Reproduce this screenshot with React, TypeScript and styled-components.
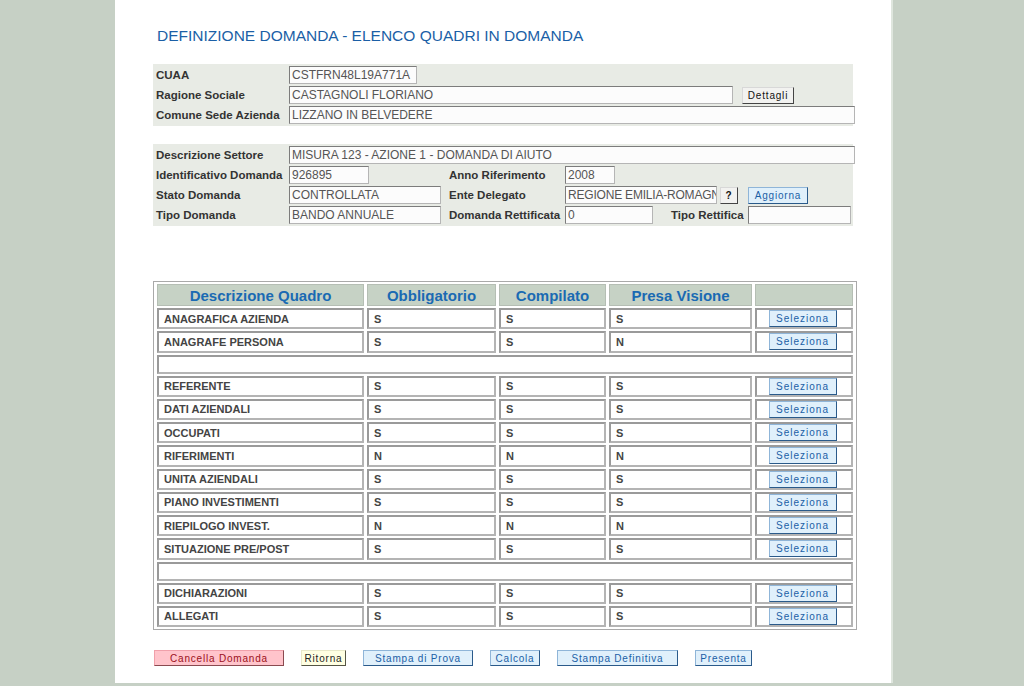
import React from "react";
import styled, { createGlobalStyle } from "styled-components";

const GlobalStyle = createGlobalStyle`
  body {
    margin: 0;
    background-color: #c6d0c5;
    font-family: "Liberation Sans", Arial, sans-serif;
  }
`;

type Quadro = { name: string; obb: string; comp: string; presa: string } | null;

const quadri: Quadro[] = [
  { name: "ANAGRAFICA AZIENDA", obb: "S", comp: "S", presa: "S" },
  { name: "ANAGRAFE PERSONA", obb: "S", comp: "S", presa: "N" },
  null,
  { name: "REFERENTE", obb: "S", comp: "S", presa: "S" },
  { name: "DATI AZIENDALI", obb: "S", comp: "S", presa: "S" },
  { name: "OCCUPATI", obb: "S", comp: "S", presa: "S" },
  { name: "RIFERIMENTI", obb: "N", comp: "N", presa: "N" },
  { name: "UNITA AZIENDALI", obb: "S", comp: "S", presa: "S" },
  { name: "PIANO INVESTIMENTI", obb: "S", comp: "S", presa: "S" },
  { name: "RIEPILOGO INVEST.", obb: "N", comp: "N", presa: "N" },
  { name: "SITUAZIONE PRE/POST", obb: "S", comp: "S", presa: "S" },
  null,
  { name: "DICHIARAZIONI", obb: "S", comp: "S", presa: "S" },
  { name: "ALLEGATI", obb: "S", comp: "S", presa: "S" },
];

const App = () => {
  return (
    <>
      <GlobalStyle />
      <Page>
        <Title>DEFINIZIONE DOMANDA - ELENCO QUADRI IN DOMANDA</Title>

        <Panel>
          <Row>
            <Label>CUAA</Label>
            <Field $w={128} readOnly value="CSTFRN48L19A771A" />
          </Row>
          <Row>
            <Label>Ragione Sociale</Label>
            <Field $w={444} readOnly value="CASTAGNOLI FLORIANO" />
            <SmallButton $w={52} $ml={9}>Dettagli</SmallButton>
          </Row>
          <Row>
            <Label>Comune Sede Azienda</Label>
            <Field $w={566} readOnly value="LIZZANO IN BELVEDERE" />
          </Row>
        </Panel>

        <Panel $mt={18}>
          <Row>
            <Label>Descrizione Settore</Label>
            <Field $w={566} readOnly value="MISURA 123 - AZIONE 1 - DOMANDA DI AIUTO" />
          </Row>
          <Row>
            <Label>Identificativo Domanda</Label>
            <Cell>
              <Field $w={80} readOnly value="926895" />
            </Cell>
            <Label $w={116} $inner>Anno Riferimento</Label>
            <Field $w={50} readOnly value="2008" />
          </Row>
          <Row>
            <Label>Stato Domanda</Label>
            <Cell>
              <Field $w={152} readOnly value="CONTROLLATA" />
            </Cell>
            <Label $w={116} $inner>Ente Delegato</Label>
            <Field $w={152} $tight readOnly value="REGIONE EMILIA-ROMAGNA" />
            <SmallButton $w={18} $ml={3} $bold>?</SmallButton>
            <BlueButton $w={60} $ml={10}>Aggiorna</BlueButton>
          </Row>
          <Row>
            <Label>Tipo Domanda</Label>
            <Cell>
              <Field $w={152} readOnly value="BANDO ANNUALE" />
            </Cell>
            <Label $w={116} $inner>Domanda Rettificata</Label>
            <Field $w={88} readOnly value="0" />
            <Label $w={77} $ml={18} $inner>Tipo Rettifica</Label>
            <Field $w={103} readOnly value="" />
          </Row>
        </Panel>

        <Table>
          <colgroup>
            <col style={{ width: 207 }} />
            <col style={{ width: 129 }} />
            <col style={{ width: 107 }} />
            <col style={{ width: 143 }} />
            <col style={{ width: 98 }} />
          </colgroup>
          <thead>
            <tr>
              <Th>Descrizione Quadro</Th>
              <Th>Obbligatorio</Th>
              <Th>Compilato</Th>
              <Th>Presa Visione</Th>
              <Th></Th>
            </tr>
          </thead>
          <tbody>
            {quadri.map((q, i) =>
              q ? (
                <tr key={i}>
                  <Td>{q.name}</Td>
                  <Td>{q.obb}</Td>
                  <Td>{q.comp}</Td>
                  <Td>{q.presa}</Td>
                  <Td $center>
                    <SelectButton>Seleziona</SelectButton>
                  </Td>
                </tr>
              ) : (
                <tr key={i}>
                  <Td colSpan={5} $empty></Td>
                </tr>
              )
            )}
          </tbody>
        </Table>

        <Actions>
          <ActionButton $kind="red" $w={130}>Cancella Domanda</ActionButton>
          <ActionButton $kind="yellow" $w={45}>Ritorna</ActionButton>
          <ActionButton $kind="blue" $w={110}>Stampa di Prova</ActionButton>
          <ActionButton $kind="blue" $w={50}>Calcola</ActionButton>
          <ActionButton $kind="blue" $w={121}>Stampa Definitiva</ActionButton>
          <ActionButton $kind="blue" $w={57}>Presenta</ActionButton>
        </Actions>
      </Page>
      <BottomLine />
    </>
  );
};

export default App;

const Page = styled.div`
  margin-left: 115px;
  width: 778px;
  min-height: 683px;
  box-sizing: border-box;
  padding: 27px 38px 0 38px;
  background-color: #ffffff;
  border-right: 2px solid #dfe6de;
`;

const BottomLine = styled.div`
  height: 3px;
  background-color: #c6d0c5;
`;

const Title = styled.h1`
  margin: 0 0 0 4px;
  font-size: 15.5px;
  line-height: 17px;
  font-weight: normal;
  color: #1b5fa6;
`;

const Panel = styled.div<{ $mt?: number }>`
  margin-top: ${({ $mt }) => ($mt !== undefined ? $mt : 20)}px;
  background-color: #e8ebe5;
  padding: 1px 0;
`;

const Row = styled.div`
  display: flex;
  align-items: center;
  height: 20px;
`;

const Label = styled.div<{ $w?: number; $ml?: number; $inner?: boolean }>`
  width: ${({ $w }) => $w || 136}px;
  margin-left: ${({ $ml }) => $ml || 0}px;
  box-sizing: border-box;
  padding-left: ${({ $inner }) => ($inner ? 0 : 3)}px;
  flex-shrink: 0;
  font-size: 11.5px;
  font-weight: bold;
  color: #333333;
  white-space: nowrap;
`;

const Cell = styled.div`
  width: 160px;
  flex-shrink: 0;
  display: flex;
`;

const Field = styled.input<{ $w: number; $tight?: boolean }>`
  width: ${({ $w }) => $w}px;
  height: 18px;
  margin: 0;
  box-sizing: border-box;
  flex-shrink: 0;
  background-color: #fcfcfc;
  border: 1px solid #7c7c7c;
  border-right-color: #b5b5b5;
  border-bottom-color: #b5b5b5;
  border-radius: 0;
  outline: none;
  padding: 0 0 0 2px;
  font-family: "Liberation Sans", Arial, sans-serif;
  font-size: 12px;
  line-height: 16px;
  letter-spacing: ${({ $tight }) => ($tight ? "-0.2px" : "0")};
  color: #555555;
`;

const SmallButton = styled.div<{ $w: number; $ml?: number; $bold?: boolean }>`
  width: ${({ $w }) => $w}px;
  margin-left: ${({ $ml }) => $ml || 0}px;
  height: 17px;
  box-sizing: border-box;
  flex-shrink: 0;
  background-color: #f2f2f0;
  border: 1px solid #d8d8d8;
  border-right-color: #444;
  border-bottom-color: #444;
  font-size: 10px;
  font-weight: ${({ $bold }) => ($bold ? "bold" : "normal")};
  letter-spacing: 0.8px;
  color: #111;
  display: flex;
  align-items: center;
  justify-content: center;
`;

const BlueButton = styled(SmallButton)`
  background-color: #e0f0fb;
  border-color: #8fb5d8;
  border-right-color: #2a5a8a;
  border-bottom-color: #2a5a8a;
  font-weight: normal;
  letter-spacing: 0.8px;
  color: #1b5fa6;
`;

const Table = styled.table`
  margin-top: 55px;
  width: 702px;
  table-layout: fixed;
  border: 1px solid #a9a9a9;
  border-spacing: 3px 2px;
`;

const Th = styled.th`
  height: 22px;
  box-sizing: border-box;
  padding: 0;
  background-color: #c6d2c5;
  border: 1px solid #b5beb4;
  font-size: 15px;
  font-weight: bold;
  color: #1a6ab3;
  text-align: center;
`;

const Td = styled.td<{ $center?: boolean; $empty?: boolean }>`
  height: ${({ $empty }) => ($empty ? "19px" : "21.25px")};
  box-sizing: border-box;
  padding: 0 0 0 ${({ $center }) => ($center ? 0 : 5)}px;
  background-color: #ffffff;
  border: 2px solid #b4b4b4;
  border-top-color: #9a9a9a;
  border-left-color: #9a9a9a;
  font-size: 11px;
  font-weight: bold;
  color: #444444;
  text-align: ${({ $center }) => ($center ? "center" : "left")};
  white-space: nowrap;
`;

const SelectButton = styled.span`
  display: inline-flex;
  align-items: center;
  justify-content: center;
  width: 68px;
  height: 17px;
  margin-left: -3px;
  box-sizing: border-box;
  background-color: #e0f0fb;
  border: 1px solid #8fb5d8;
  border-right-color: #2a5a8a;
  border-bottom-color: #2a5a8a;
  font-size: 10px;
  font-weight: normal;
  letter-spacing: 1px;
  color: #1b5fa6;
  vertical-align: middle;
`;

const Actions = styled.div`
  display: flex;
  gap: 17px;
  margin-top: 20px;
  padding-left: 1px;
`;

const kindColors = {
  red: { bg: "#ffc4cb", fg: "#9c1020", light: "#f0a0aa", dark: "#8a4a50" },
  yellow: { bg: "#ffffe2", fg: "#222222", light: "#e8e8c8", dark: "#555544" },
  blue: { bg: "#e0f0fb", fg: "#1b5fa6", light: "#8fb5d8", dark: "#2a5a8a" },
};

const ActionButton = styled.div<{ $kind: "red" | "yellow" | "blue"; $w: number }>`
  width: ${({ $w }) => $w}px;
  height: 16px;
  box-sizing: border-box;
  background-color: ${({ $kind }) => kindColors[$kind].bg};
  border: 1px solid ${({ $kind }) => kindColors[$kind].light};
  border-right-color: ${({ $kind }) => kindColors[$kind].dark};
  border-bottom-color: ${({ $kind }) => kindColors[$kind].dark};
  color: ${({ $kind }) => kindColors[$kind].fg};
  font-size: 10px;
  letter-spacing: 0.8px;
  display: flex;
  align-items: center;
  justify-content: center;
  white-space: nowrap;
`;
